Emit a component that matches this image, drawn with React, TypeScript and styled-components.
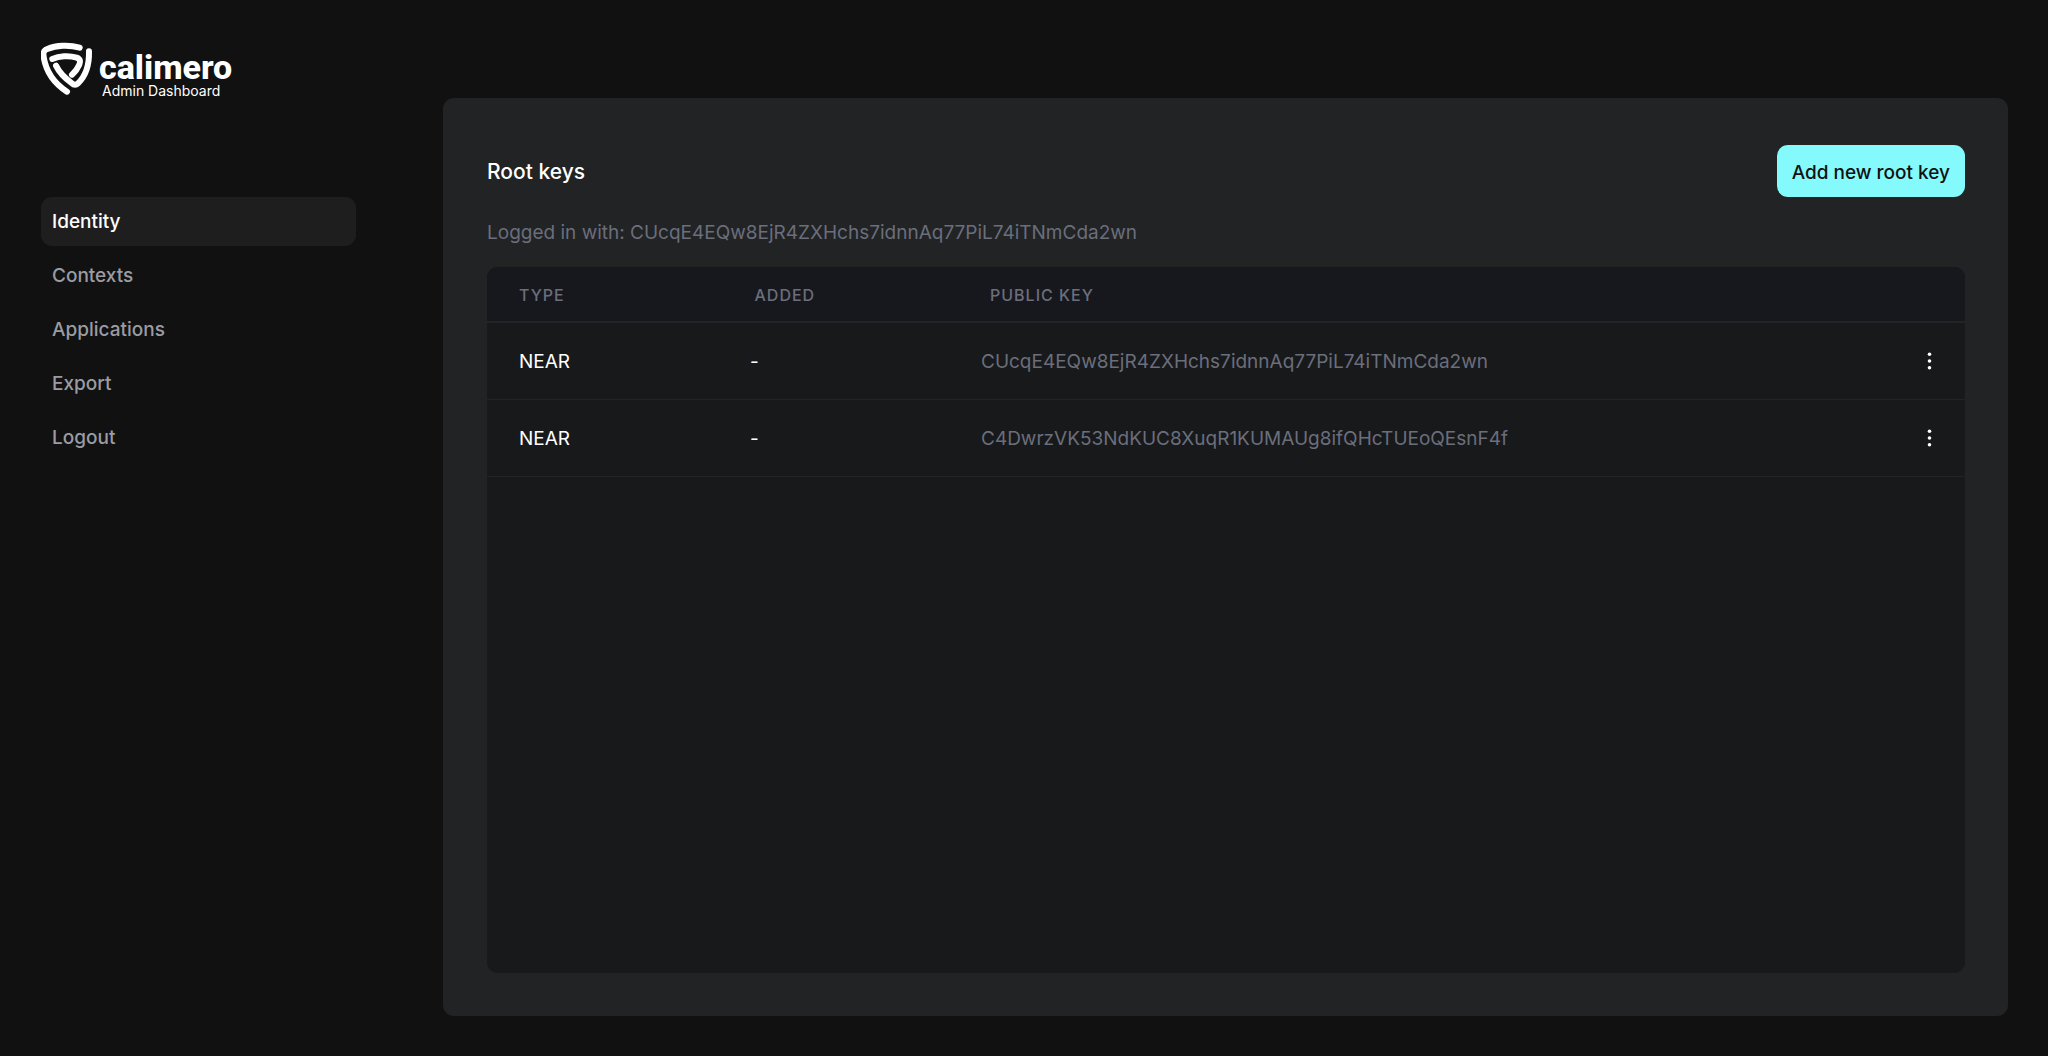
import React from 'react';
import styled, { createGlobalStyle } from 'styled-components';

const color = {
  page: '#111111',
  panel: '#212325',
  table: '#18191b',
  tableHead: '#17181e',
  line: '#232426',
  active: '#1e1e1e',
  accent: '#84fafc',
  text: '#ffffff',
  nav: '#9b9ca3',
  muted: '#6b6e7b',
};

const GlobalStyle = createGlobalStyle`
  *, *::before, *::after { box-sizing: border-box; }
  body {
    margin: 0;
    background: ${color.page};
    color: ${color.text};
    font-family: Inter, "Liberation Sans", sans-serif;
    font-size: 19px;
    line-height: 24px;
  }
`;

const Page = styled.div`
  display: flex;
  min-height: 100vh;
`;

const Sidebar = styled.aside`
  flex: none;
  width: 443px;
  padding: 40px 87px 40px 41px;
`;

const Brand = styled.a`
  display: flex;
  align-items: flex-start;
  gap: 6px;
  height: 64px;
  color: inherit;
  text-decoration: none;
`;

const BrandText = styled.span`
  display: flex;
  flex-direction: column;
  padding-top: 11px;
`;

const BrandName = styled.span`
  font: 800 34px/32px Roboto, "Noto Sans", sans-serif;
`;

const BrandSub = styled.span`
  padding-left: 3px;
  font-size: 14px;
  line-height: 16px;
`;

const Nav = styled.nav`
  display: flex;
  flex-direction: column;
  gap: 5px;
  margin-top: 93px;
`;

const NavLink = styled.a<{ $active?: boolean }>`
  display: flex;
  align-items: center;
  height: 49px;
  padding: 1px 11px 0;
  border-radius: 11px;
  background: ${(p) => (p.$active ? color.active : 'transparent')};
  color: ${(p) => (p.$active ? color.text : color.nav)};
  font-weight: 500;
  text-decoration: none;
`;

const Main = styled.main`
  display: flex;
  flex: 1;
  min-width: 0;
  padding: 98px 40px 40px 0;
`;

const Panel = styled.section`
  display: flex;
  flex: 1;
  flex-direction: column;
  min-width: 0;
  padding: 47px 43px 43px 44px;
  border-radius: 11px;
  background: ${color.panel};
`;

const PanelHeader = styled.header`
  display: flex;
  align-items: center;
  justify-content: space-between;
`;

const Title = styled.h1`
  margin: 0;
  padding-top: 2px;
  font-size: 21px;
  font-weight: 500;
`;

const AddButton = styled.button`
  height: 52px;
  padding: 3px 15px 0;
  border: 0;
  border-radius: 11px;
  background: ${color.accent};
  color: #111111;
  font: inherit;
  font-weight: 500;
  cursor: pointer;
`;

const Account = styled.p`
  margin: 24px 0 22px;
  color: ${color.muted};
`;

const TableBox = styled.div`
  flex: 1;
  overflow: hidden;
  border-radius: 11px;
  background: ${color.table};
`;

const Table = styled.table`
  display: block;
  width: 100%;
`;

const Head = styled.thead`
  display: block;
`;

const Body = styled.tbody`
  display: block;
`;

const HeadRow = styled.tr`
  display: grid;
  grid-template-columns: repeat(6, 1fr);
  align-items: center;
  height: 56px;
  padding: 0 33px 0 32px;
  border-bottom: 2px solid ${color.line};
  background: ${color.tableHead};
`;

const HeadCell = styled.th`
  padding: 1px 0 0;
  color: ${color.muted};
  font-size: 16px;
  font-weight: 500;
  letter-spacing: 1px;
  text-align: left;
`;

const Row = styled.tr`
  display: grid;
  grid-template-columns: repeat(6, 1fr) 27px;
  align-items: center;
  height: 77px;
  padding: 0 33px 0 32px;
  border-bottom: 1px solid ${color.line};
`;

const Cell = styled.td<{ $muted?: boolean; $span?: number }>`
  grid-column: span ${(p) => p.$span ?? 1};
  padding: 2px 0 0;
  color: ${(p) => (p.$muted ? color.muted : color.text)};
`;

const ActionCell = styled.td`
  padding: 0;
`;

const MenuButton = styled.button`
  display: flex;
  align-items: center;
  justify-content: flex-end;
  width: 100%;
  height: 24px;
  padding: 0;
  border: 0;
  background: none;
  color: inherit;
  cursor: pointer;
`;

const NAV_ITEMS = ['Identity', 'Contexts', 'Applications', 'Export', 'Logout'];

const CURRENT_KEY = 'CUcqE4EQw8EjR4ZXHchs7idnnAq77PiL74iTNmCda2wn';

const ROOT_KEYS = [
  { type: 'NEAR', added: '-', publicKey: CURRENT_KEY },
  { type: 'NEAR', added: '-', publicKey: 'C4DwrzVK53NdKUC8XuqR1KUMAUg8ifQHcTUEoQEsnF4f' },
];

function ShieldLogo() {
  return (
    <svg
      width="52"
      height="56"
      viewBox="21 12 156 168"
      fill="none"
      stroke="currentColor"
      strokeWidth="18"
      strokeLinecap="round"
      strokeLinejoin="round"
      aria-hidden="true"
    >
      <path d="M137 35C105 26 66 28 40 39C29 43 27 50 29 62C35 103 58 140 99 167" />
      <path d="M165 46C166 90 155 120 132 142C126 148 120 148 114 142C96 129 77 112 66 89" />
      <path d="M55 69C75 60 105 58 128 65C139 69 140 76 136 86C131 98 124 107 114 116" />
    </svg>
  );
}

function DotsIcon() {
  return (
    <svg width="5" height="18" viewBox="0 0 5 18" fill="currentColor" aria-hidden="true">
      <circle cx="2.5" cy="2.2" r="1.8" />
      <circle cx="2.5" cy="9" r="1.8" />
      <circle cx="2.5" cy="15.8" r="1.8" />
    </svg>
  );
}

export default function App() {
  return (
    <>
      <GlobalStyle />
      <Page>
        <Sidebar>
          <Brand href="#">
            <ShieldLogo />
            <BrandText>
              <BrandName>calimero</BrandName>
              <BrandSub>Admin Dashboard</BrandSub>
            </BrandText>
          </Brand>
          <Nav>
            {NAV_ITEMS.map((item, i) => (
              <NavLink
                key={item}
                href={`#${item.toLowerCase()}`}
                $active={i === 0}
                aria-current={i === 0 ? 'page' : undefined}
              >
                {item}
              </NavLink>
            ))}
          </Nav>
        </Sidebar>
        <Main>
          <Panel>
            <PanelHeader>
              <Title>Root keys</Title>
              <AddButton type="button">Add new root key</AddButton>
            </PanelHeader>
            <Account>Logged in with: {CURRENT_KEY}</Account>
            <TableBox>
              <Table>
                <Head>
                  <HeadRow>
                    <HeadCell scope="col">TYPE</HeadCell>
                    <HeadCell scope="col">ADDED</HeadCell>
                    <HeadCell scope="col">PUBLIC KEY</HeadCell>
                  </HeadRow>
                </Head>
                <Body>
                  {ROOT_KEYS.map((key) => (
                    <Row key={key.publicKey}>
                      <Cell>{key.type}</Cell>
                      <Cell>{key.added}</Cell>
                      <Cell $muted $span={4}>{key.publicKey}</Cell>
                      <ActionCell>
                        <MenuButton type="button" aria-label="Key options">
                          <DotsIcon />
                        </MenuButton>
                      </ActionCell>
                    </Row>
                  ))}
                </Body>
              </Table>
            </TableBox>
          </Panel>
        </Main>
      </Page>
    </>
  );
}
